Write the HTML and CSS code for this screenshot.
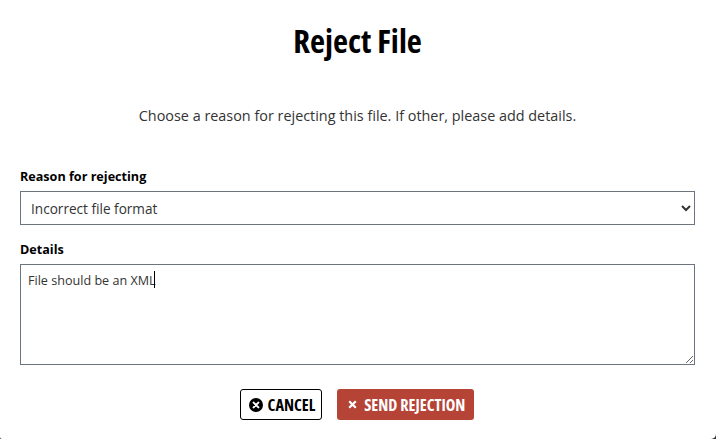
FILE: index.html
```html
<!DOCTYPE html>
<html lang="en">
<head>
    <meta charset="UTF-8">
    <meta name="viewport" content="width=device-width, initial-scale=1.0">
    <title>Reject File</title>
    <link rel="stylesheet" href="styles.css">
</head>
<body>

    <div class="modal">
        <h2 class="modal-title">Reject File</h2>
        <p class="modal-intro">Choose a reason for rejecting this file. If other, please add details.</p>

        <form class="reject-form">
            <div class="form-field">
                <label for="reason">Reason for rejecting</label>
                <select id="reason">
                    <option>Incorrect file format</option>
                    <option>Other</option>
                </select>
            </div>

            <div class="form-field">
                <label for="details">Details</label>
                <div class="details-box">
                    <textarea id="details">File should be an XML</textarea>
                    <span class="caret"></span>
                </div>
            </div>

            <div class="form-actions">
                <button type="button" class="btn btn-cancel">
                    <svg class="btn-icon" viewBox="0 0 14 14" width="14" height="14" aria-hidden="true">
                        <circle cx="7" cy="7" r="7" fill="#000"/>
                        <path d="M4.6 4.6 9.4 9.4M9.4 4.6 4.6 9.4" stroke="#fff" stroke-width="2" stroke-linecap="round"/>
                    </svg>
                    Cancel
                </button>
                <button type="button" class="btn btn-send">
                    <svg class="btn-icon" viewBox="0 0 9 9" width="9" height="9" aria-hidden="true">
                        <path d="M1.2 1.2 7.8 7.8M7.8 1.2 1.2 7.8" stroke="#fff" stroke-width="2.2"/>
                    </svg>
                    Send Rejection
                </button>
            </div>
        </form>
    </div>

</body>
</html>
```

FILE: styles.css
```css
/* Page */
html, body {
    height: 100%;
}

body {
    margin: 0;
    background: #333;
    font-family: "Open Sans", sans-serif;
    color: #000;
    overflow: hidden;
}

.modal {
    box-sizing: border-box;
    height: 439px;
    padding: 18px 21px 0 20px;
    background: #fff;
    border-radius: 0 0 5px 2px;
}

/* Heading */
.modal-title {
    margin: 0;
    font-size: 32.8px;
    line-height: 46px;
    font-weight: 700;
    font-stretch: condensed;
    text-align: center;
}

.modal-intro {
    margin: 42px 0 0;
    font-size: 14.4px;
    line-height: 19px;
    color: #333;
    text-align: center;
}

/* Form fields */
.reject-form {
    margin-top: 43px;
}

.form-field {
    margin-bottom: 16px;
}

.form-field label {
    display: block;
    margin-bottom: 5px;
    font-size: 12.6px;
    line-height: 18px;
    font-weight: 700;
}

select, textarea {
    display: block;
    box-sizing: border-box;
    width: 100%;
    border: 1px solid #6c757d;
    border-radius: 0;
    background: #fff;
    font-family: "Open Sans", sans-serif;
    color: #333;
}

select {
    height: 34px;
    padding: 0 6px;
    font-size: 13.6px;
}

.details-box {
    position: relative;
}

textarea {
    height: 101px;
    padding: 6px 7px;
    font-size: 12.6px;
    line-height: 19px;
    outline: none;
}

.caret {
    position: absolute;
    left: 134px;
    top: 7px;
    width: 1px;
    height: 17px;
    background: #000;
}

/* Buttons */
.form-actions {
    display: flex;
    justify-content: center;
    gap: 15px;
    margin-top: 24px;
    padding-right: 1px;
}

.btn {
    display: flex;
    align-items: center;
    box-sizing: border-box;
    height: 31px;
    border-radius: 3px;
    font-family: "Open Sans", sans-serif;
    font-size: 16.2px;
    font-weight: 700;
    font-stretch: condensed;
    text-transform: uppercase;
    cursor: pointer;
}

.btn-icon {
    flex: none;
}

.btn-cancel {
    gap: 5px;
    padding: 0 6px 0 8px;
    background: #fff;
    border: 1px solid #000;
    color: #000;
}

.btn-send {
    gap: 7px;
    padding: 0 9px 0 11px;
    background: #b54437;
    border: none;
    color: #fff;
}
```
